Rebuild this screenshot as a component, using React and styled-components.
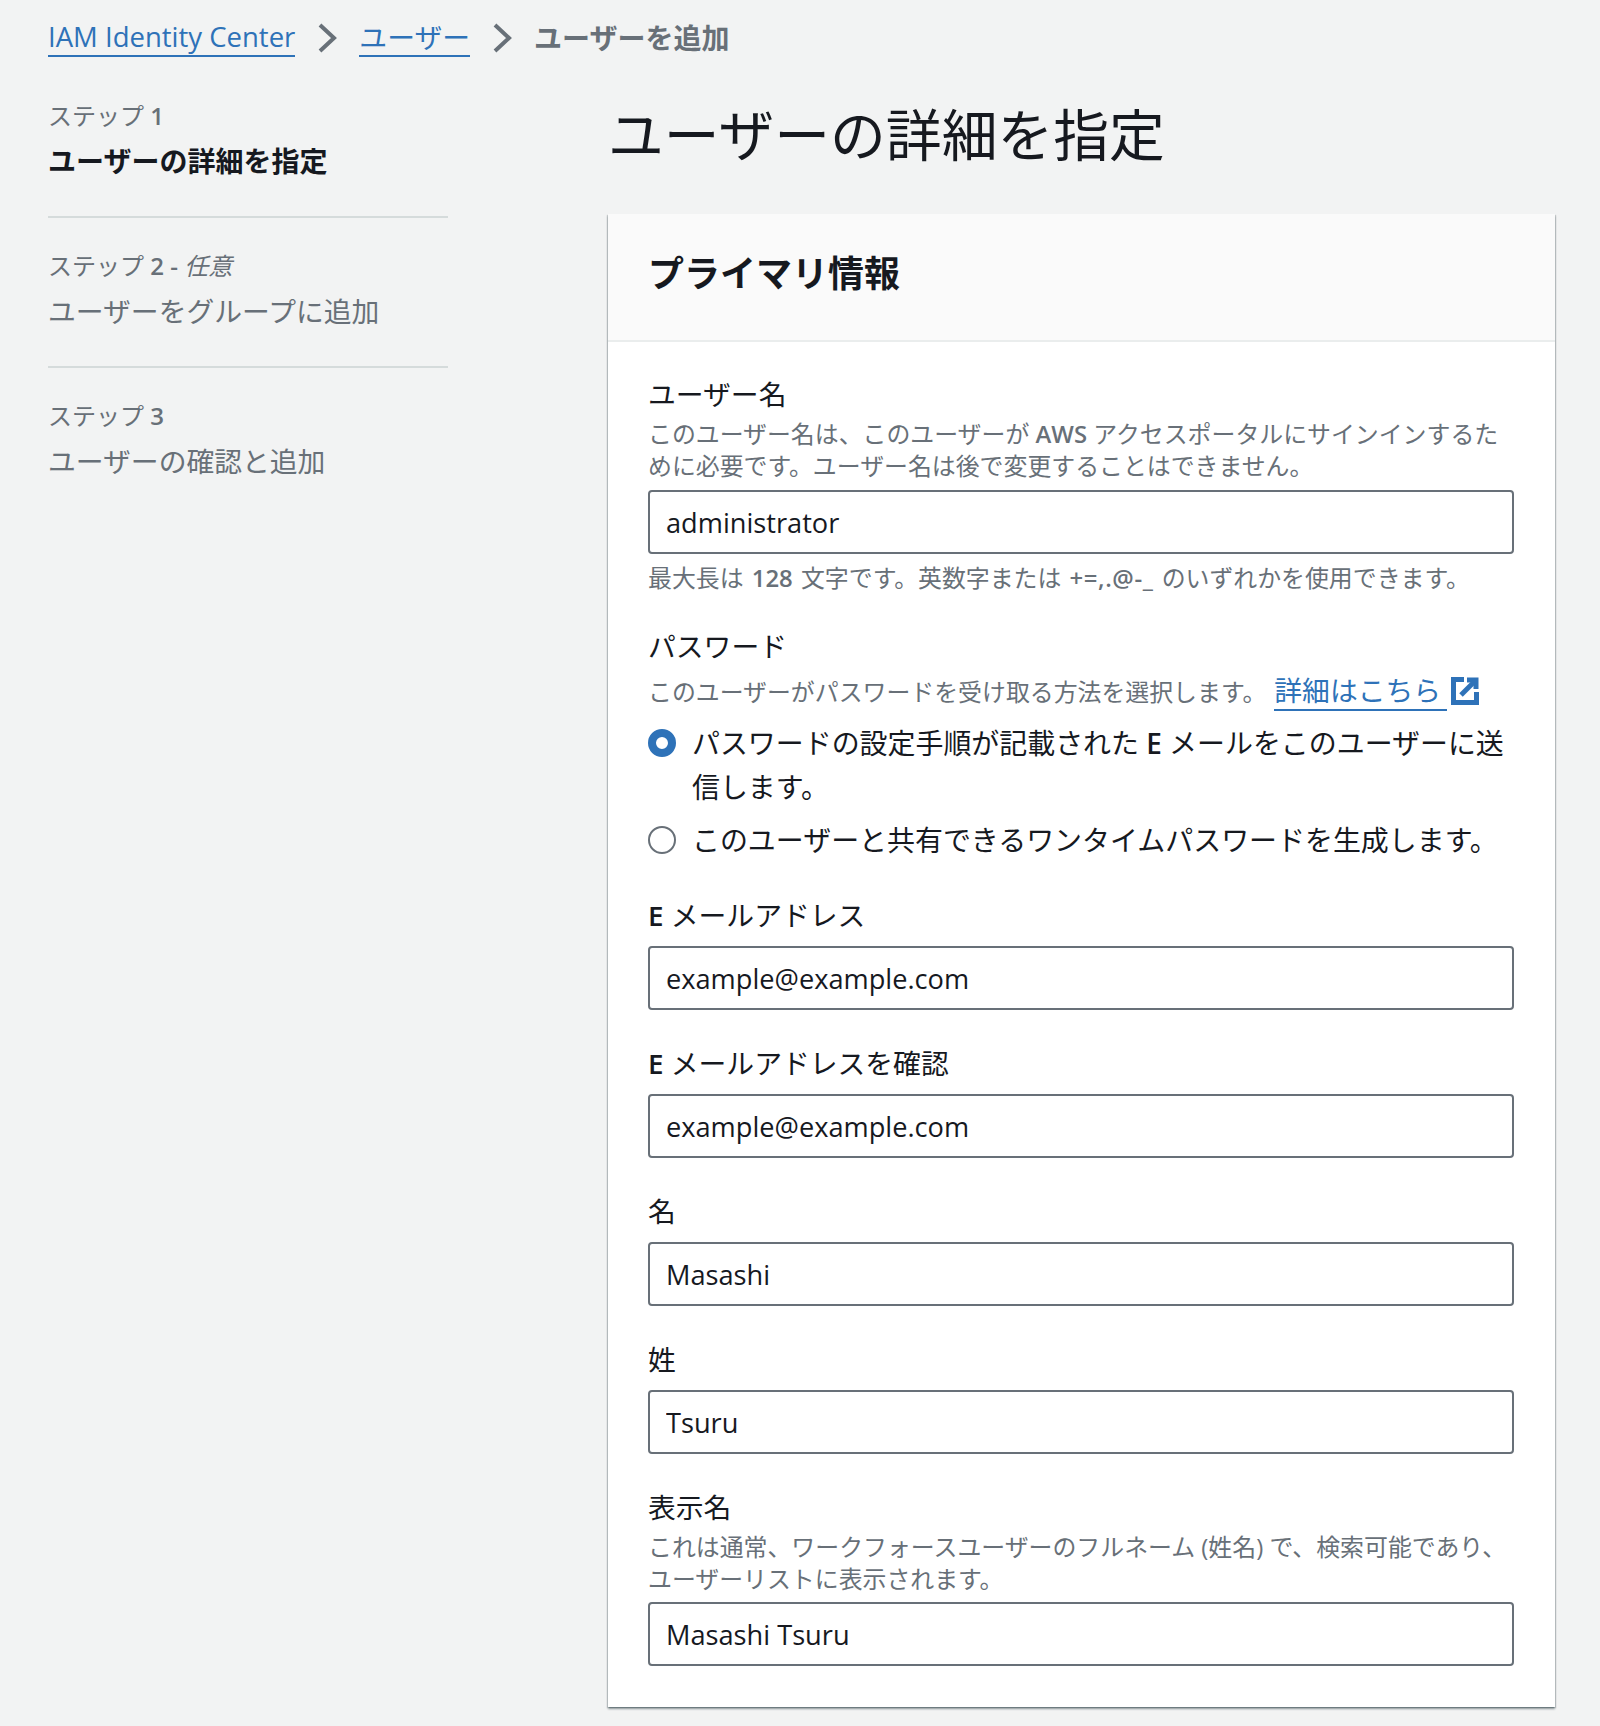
import React from "react";
import styled, { createGlobalStyle } from "styled-components";

const Global = createGlobalStyle`
  html, body { margin: 0; padding: 0; background: #f2f3f3; }
  body {
    font-family: "Open Sans", "Noto Sans CJK JP", sans-serif;
    color: #16191f;
    font-size: 27.8px;
    line-height: 43px;
  }
  * { box-sizing: border-box; }
`;

const Page = styled.div`
  width: 1600px;
  height: 1726px;
  padding: 16px 45px 0 48px;
  overflow: hidden;
`;
const Crumbs = styled.nav`
  display: flex;
  align-items: center;
  height: 44px;
`;
const CrumbLink = styled.a`
  color: #2e72b8;
  font-size: ${(p) => (p.$latin ? 27.5 : 27.8)}px;
  line-height: 36px;
  border-bottom: 2px solid #2e72b8;
  text-decoration: none;
`;
const CrumbCurrent = styled.span`
  color: #687078;
  font-weight: 700;
  font-size: 28px;
`;
const ChevronIcon = styled.svg`
  width: 20px;
  height: 30px;
  margin: 0 22px;
  flex: none;
`;
const Columns = styled.div`
  display: grid;
  grid-template-columns: 400px 947px;
  column-gap: 160px;
  margin-top: 40px;
`;
const Steps = styled.ol`
  list-style: none;
  margin: 0;
  padding: 0;
`;
const Step = styled.li`
  padding-bottom: ${(p) => (p.$last ? 0 : 35)}px;
  margin-bottom: ${(p) => (p.$last ? 0 : 32)}px;
  border-bottom: ${(p) => (p.$last ? "none" : "2px solid #d5dbdb")};
`;
const StepNo = styled.div`
  font-size: 24px;
  line-height: 31px;
  color: #687078;
  margin-bottom: 11px;
  em { font-style: italic; }
`;
const StepName = styled.div`
  line-height: 39px;
  color: ${(p) => (p.$active ? "#16191f" : "#687078")};
  font-weight: ${(p) => (p.$active ? 700 : 400)};
  font-size: ${(p) => (p.$active ? 28 : 27.8)}px;
`;
const Main = styled.main`
  min-width: 0;
`;
const Title = styled.h1`
  margin: -1px 0 45px;
  font-size: 55.8px;
  line-height: 70px;
  font-weight: 400;
`;
const Card = styled.section`
  background: #fff;
  box-shadow: 0 2px 2px 0 rgba(0, 28, 36, 0.4), 1px 1px 1px 0 rgba(0, 28, 36, 0.15), -1px 1px 1px 0 rgba(0, 28, 36, 0.15);
`;
const CardHeader = styled.header`
  height: 128px;
  display: flex;
  align-items: center;
  padding: 0 40px 7px;
  background: #fafafa;
  border-bottom: 2px solid #eaeded;
`;
const CardTitle = styled.h2`
  margin: 0;
  font-size: 36px;
  line-height: 48px;
  font-weight: 700;
`;
const CardBody = styled.div`
  padding: 33px 41px 41px 40px;
  display: flex;
  flex-direction: column;
  gap: 34px;
`;
const Field = styled.div`
  display: flex;
  flex-direction: column;
  margin-bottom: ${(p) => p.$after ?? 0}px;
`;
const Label = styled.label`
  line-height: 39px;
  margin-bottom: ${(p) => (p.$withHint ? 4 : 11)}px;
`;
const Hint = styled.div`
  font-size: 23.9px;
  line-height: 32px;
  color: #687078;
  margin-top: ${(p) => p.$mt ?? 0}px;
  margin-bottom: ${(p) => p.$mb ?? 0}px;
`;
const NoteHint = styled(Hint)`
  word-spacing: 2px;
`;
const Latin = styled.span`
  font-weight: 600;
  letter-spacing: ${(p) => (p.$wide ? 0.6 : 0)}px;
`;
const HintLink = styled.a`
  color: #2e72b8;
  font-size: 27.8px;
  line-height: 36px;
  margin-left: 8px;
  text-decoration: none;
  border-bottom: 2px solid #2e72b8;
  padding-right: 6px;
`;
const ExternalIcon = styled.svg`
  width: 28px;
  height: 28px;
  vertical-align: -4px;
  margin-left: 4px;
`;
const Input = styled.input`
  width: 100%;
  height: 64px;
  padding: 0 16px;
  border: 2px solid #687078;
  border-radius: 4px;
  background: #fff;
  color: #16191f;
  font: inherit;
  font-size: 27.2px;
  font-weight: 500;
  outline: none;
`;
const Radios = styled.div`
  display: flex;
  flex-direction: column;
  gap: 9px;
  margin-top: 13px;
`;
const RadioRow = styled.div`
  display: flex;
  align-items: flex-start;
  gap: 16px;
`;
const RadioDot = styled.span`
  flex: none;
  width: 28px;
  height: 28px;
  margin-top: 8px;
  border-radius: 50%;
  background: #fff;
  border: ${(p) => (p.$on ? "8px solid #2e72b8" : "2.5px solid #687078")};
`;
const RadioText = styled.div`
  font-size: 27.95px;
  line-height: 44px;
  flex: 1;
`;

const Chevron = () => (
  <ChevronIcon viewBox="0 0 20 30" fill="none" stroke="#687078" strokeWidth="4">
    <path d="M3 2 L17 15 L3 28" />
  </ChevronIcon>
);

const fields = [
  [<><Latin>E</Latin> メールアドレス</>, "example@example.com", "email"],
  [<><Latin>E</Latin> メールアドレスを確認</>, "example@example.com", "confirm"],
  ["名", "Masashi", "given"],
  ["姓", "Tsuru", "family"],
];

export default function App() {
  return (
    <Page>
      <Global />
      <Crumbs>
        <CrumbLink $latin href="#">IAM Identity Center</CrumbLink>
        <Chevron />
        <CrumbLink href="#">ユーザー</CrumbLink>
        <Chevron />
        <CrumbCurrent>ユーザーを追加</CrumbCurrent>
      </Crumbs>
      <Columns>
        <Steps>
          <Step>
            <StepNo>ステップ <Latin>1</Latin></StepNo>
            <StepName $active>ユーザーの詳細を指定</StepName>
          </Step>
          <Step>
            <StepNo>ステップ <Latin>2 -</Latin> <em>任意</em></StepNo>
            <StepName>ユーザーをグループに追加</StepName>
          </Step>
          <Step $last>
            <StepNo>ステップ <Latin>3</Latin></StepNo>
            <StepName>ユーザーの確認と追加</StepName>
          </Step>
        </Steps>
        <Main>
          <Title>ユーザーの詳細を指定</Title>
          <Card>
            <CardHeader>
              <CardTitle>プライマリ情報</CardTitle>
            </CardHeader>
            <CardBody>
              <Field $after={-1}>
                <Label $withHint>ユーザー名</Label>
                <Hint $mb={8}>
                  このユーザー名は、このユーザーが <Latin>AWS</Latin> アクセスポータルにサインインするた
                  <br />
                  めに必要です。ユーザー名は後で変更することはできません。
                </Hint>
                <Input readOnly value="administrator" />
                <NoteHint $mt={8}>最大長は <Latin>128</Latin> 文字です。英数字または <Latin $wide>+=,.@-_</Latin> のいずれかを使用できます。</NoteHint>
              </Field>
              <Field>
                <Label $withHint>パスワード</Label>
                <Hint $mt={2}>
                  このユーザーがパスワードを受け取る方法を選択します。
                  <HintLink href="#">詳細はこちら</HintLink>
                  <ExternalIcon viewBox="0 0 28 28" fill="none" stroke="#2e72b8" strokeWidth="5">
                    <path d="M13 2.5 H2.5 V25.5 H25.5 V15" />
                    <path d="M16 3 H25 V12" />
                    <path d="M25 3 L10 18" />
                  </ExternalIcon>
                </Hint>
                <Radios>
                  <RadioRow>
                    <RadioDot $on />
                    <RadioText>
                      パスワードの設定手順が記載された <Latin>E</Latin> メールをこのユーザーに送
                      <br />
                      信します。
                    </RadioText>
                  </RadioRow>
                  <RadioRow>
                    <RadioDot />
                    <RadioText>このユーザーと共有できるワンタイムパスワードを生成します。</RadioText>
                  </RadioRow>
                </Radios>
              </Field>
              {fields.map(([label, value, id]) => (
                <Field key={id}>
                  <Label>{label}</Label>
                  <Input readOnly value={value} />
                </Field>
              ))}
              <Field>
                <Label $withHint>表示名</Label>
                <Hint $mb={7}>これは通常、ワークフォースユーザーのフルネーム (姓名) で、検索可能であり、ユーザーリストに表示されます。</Hint>
                <Input readOnly value="Masashi Tsuru" />
              </Field>
            </CardBody>
          </Card>
        </Main>
      </Columns>
    </Page>
  );
}
